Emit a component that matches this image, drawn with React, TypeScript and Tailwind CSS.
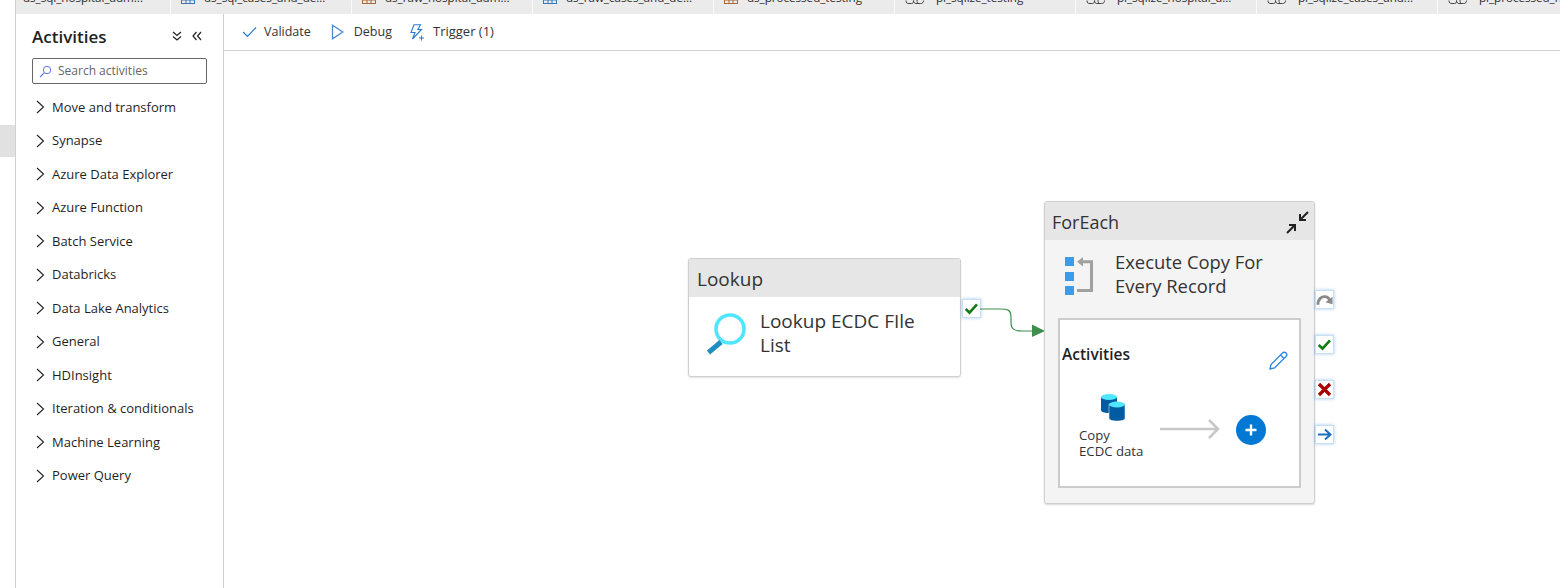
import React from "react";

const font = { fontFamily: '"Open Sans","Noto Sans",sans-serif' };

function TableIcon({ color }: { color: string }) {
  return (
    <svg width="14" height="14" viewBox="0 0 14 14" className="shrink-0">
      <rect x="0.5" y="-4.5" width="13" height="8" fill="none" stroke={color} />
      <path d="M5 -4V3M9 -4V3M0 0H14" stroke={color} />
    </svg>
  );
}

function PipeIcon() {
  return (
    <svg width="20" height="14" viewBox="0 0 20 14" className="shrink-0">
      <path d="M1 0.5C1 3 2 3.5 4 3.5H6.5C8 3.5 8.5 2.5 8.5 0.5M8.5 0.5C8.5 3 10 3.5 11 3.5H15.5C17.5 3.5 18.5 2.5 18.5 0.5M12 0C12 2 12.5 3 13 3.5" fill="none" stroke="#444" strokeWidth="1" />
    </svg>
  );
}

const tabs: { label: string; icon?: "blue" | "brown" | "pipe"; first?: boolean }[] = [
  { label: "ds_sql_hospital_adm...", first: true },
  { label: "ds_sql_cases_and_de...", icon: "blue" },
  { label: "ds_raw_hospital_adm...", icon: "brown" },
  { label: "ds_raw_cases_and_de...", icon: "blue" },
  { label: "ds_processed_testing", icon: "brown" },
  { label: "pl_sqlize_testing", icon: "pipe" },
  { label: "pl_sqlize_hospital_a...", icon: "pipe" },
  { label: "pl_sqlize_cases_and...", icon: "pipe" },
  { label: "pl_processed_h...", icon: "pipe" },
];

const groups = [
  "Move and transform",
  "Synapse",
  "Azure Data Explorer",
  "Azure Function",
  "Batch Service",
  "Databricks",
  "Data Lake Analytics",
  "General",
  "HDInsight",
  "Iteration & conditionals",
  "Machine Learning",
  "Power Query",
];

function Status({ top, children }: { top: number; children: React.ReactNode }) {
  return (
    <div
      className="absolute left-[1315px] w-[19px] h-[19px] bg-white border border-[#c7e0f4] shadow-[0_0_3px_rgba(80,150,230,0.5)] flex items-center justify-center"
      style={{ top }}
    >
      {children}
    </div>
  );
}

const Check = () => (
  <svg width="15" height="13" viewBox="0 0 15 13">
    <path d="M1.8 7L5.5 10.6L13 2.4" fill="none" stroke="#107c10" strokeWidth="2.6" />
  </svg>
);

export default function App() {
  return (
    <div className="flex w-[1560px] h-[588px] bg-white overflow-hidden text-[#242424]" style={font}>
      <div className="w-[16px] shrink-0 border-r border-[#d0d0d0] pt-[125px]">
        <div className="h-[32px] bg-[#e1e1e1]" />
      </div>
      <div className="flex-1 flex flex-col min-w-0">
        <div className="h-[14px] shrink-0 flex bg-[#ebebeb] overflow-hidden">
          {tabs.map((t) => (
            <div
              key={t.label}
              className={`${t.first ? "w-[155px] pl-[7px]" : "w-[181px] pl-[10px]"} shrink-0 h-[14px] border-r border-[#fafafa] flex items-start`}
            >
              {t.icon === "pipe" ? (
                <span className="mr-[11px] flex"><PipeIcon /></span>
              ) : t.icon ? (
                <span className="mr-[9px] flex"><TableIcon color={t.icon === "blue" ? "#3a76b8" : "#a8683a"} /></span>
              ) : null}
              <span className="text-[11.6px] leading-[16px] -mt-[10px] whitespace-nowrap text-[#2a2a2a]">{t.label}</span>
            </div>
          ))}
        </div>
        <div className="flex-1 flex min-h-0">
          <aside className="w-[208px] shrink-0 border-r border-[#d0d0d0] pl-[16px] pr-[16px]">
            <div className="flex items-center justify-between h-[44px]">
              <span className="text-[17px] font-semibold text-[#1f1f1f] pt-[1px]">Activities</span>
              <div className="flex items-center gap-[10px] pr-[5px]">
                <svg width="10" height="10" viewBox="0 0 10 10">
                  <path d="M1 1L5 4.5L9 1M1 5.5L5 9L9 5.5" fill="none" stroke="#222" strokeWidth="1.2" />
                </svg>
                <svg width="10" height="10" viewBox="0 0 10 10">
                  <path d="M4.5 1L1 5L4.5 9M9 1L5.5 5L9 9" fill="none" stroke="#222" strokeWidth="1.2" />
                </svg>
              </div>
            </div>
            <div className="h-[26px] w-[175px] border border-[#666] rounded-[2px] flex items-center pl-[6px]">
              <svg width="13" height="13" viewBox="0 0 13 13" className="mr-[6px]">
                <circle cx="8" cy="5" r="3.7" fill="none" stroke="#5c7ce0" strokeWidth="1" />
                <path d="M5.2 7.8L1 12" stroke="#5c7ce0" strokeWidth="1.2" />
              </svg>
              <span className="text-[12px] text-[#666]">Search activities</span>
            </div>
            <div className="mt-[6.5px]">
              {groups.map((g) => (
                <div key={g} className="flex items-center h-[33.5px] pl-[4px]">
                  <svg width="9" height="14" viewBox="0 0 9 14" className="mr-[7px] shrink-0">
                    <path d="M1 1L7.5 7L1 13" fill="none" stroke="#222" strokeWidth="1.1" />
                  </svg>
                  <span className="text-[13px] text-[#1f1f1f] whitespace-nowrap">{g}</span>
                </div>
              ))}
            </div>
          </aside>
          <div className="flex-1 flex flex-col min-w-0">
            <div className="h-[37px] shrink-0 border-b border-[#d0d0d0] flex items-center pl-[18px] text-[12.5px] text-[#333]">
              <svg width="15" height="12" viewBox="0 0 15 12" className="mr-[7px]">
                <path d="M1 6L5.5 10.5L14 1.5" fill="none" stroke="#2a7bd0" strokeWidth="1.2" />
              </svg>
              <span>Validate</span>
              <svg width="13" height="16" viewBox="0 0 13 16" className="ml-[20px] mr-[10px]">
                <path d="M1.5 1.2L11.8 8L1.5 14.8Z" fill="none" stroke="#4a86d0" strokeWidth="1.3" />
              </svg>
              <span>Debug</span>
              <svg width="16" height="17" viewBox="0 0 16 17" className="ml-[17px] mr-[8px]">
                <path d="M5 0.8H11.5L8.8 5.5H12.5L3.5 15L6 8.5H2Z" fill="none" stroke="#2a7bd0" strokeWidth="1.1" />
                <path d="M12.5 11.5V16.5M10 14H15" stroke="#2a7bd0" strokeWidth="1.1" />
              </svg>
              <span className="text-[13px]">Trigger (1)</span>
            </div>
            <div className="flex-1" />
          </div>
        </div>
      </div>

      {/* Lookup node */}
      <div className="absolute left-[688px] top-[258px] w-[273px] h-[119px] rounded-[3px] bg-white border border-[#cfcfcf] shadow-[0_1px_2px_rgba(0,0,0,0.12)] overflow-hidden">
        <div className="h-[38px] bg-[#e6e6e6] flex items-center pl-[8px] pt-[3px] text-[19px] text-[#333]">Lookup</div>
        <div className="flex pl-[18px] pt-[12px]">
          <svg width="40" height="44" viewBox="0 0 40 44" className="mt-[3px] shrink-0">
            <circle cx="23" cy="17" r="14" fill="none" stroke="#50e6ff" strokeWidth="3.6" />
            <path d="M14 30L1.5 40.5" stroke="#1f8fc0" strokeWidth="5" />
          </svg>
          <div className="ml-[13px] w-[170px] text-[19px] leading-[24px] text-[#333]">Lookup ECDC FIle List</div>
        </div>
      </div>

      {/* Connector */}
      <div className="absolute left-[962px] top-[299px] w-[19px] h-[19px] bg-white border border-[#c7e0f4] shadow-[0_0_3px_rgba(80,150,230,0.5)] flex items-center justify-center">
        <Check />
      </div>
      <svg width="70" height="40" viewBox="0 0 70 40" className="absolute left-[980px] top-[300px]">
        <path d="M0 9H20C28 9 31 10 31 17V22C31 29 34 31 42 31H54" fill="none" stroke="#3e8e4c" strokeWidth="1.2" />
        <path d="M52 24.5L65 31L52 37Z" fill="#3e8e4c" />
      </svg>

      {/* ForEach node */}
      <div className="absolute left-[1044px] top-[201px] w-[271px] h-[303px] rounded-[3px] bg-[#f4f4f4] border border-[#cfcfcf] shadow-[0_1px_2px_rgba(0,0,0,0.15)] overflow-hidden">
        <div className="h-[38px] bg-[#e6e6e6] flex items-center justify-between pl-[7px] pr-[4px] text-[18px] text-[#333]">
          <span className="pt-[3px]">ForEach</span>
          <svg width="25" height="25" viewBox="0 0 25 25" className="mt-[3px]">
            <path d="M23 2L15 10M15 4V10H21M2 23L10 15M4 15H10V21" fill="none" stroke="#222" strokeWidth="2" />
          </svg>
        </div>
        <div className="flex pl-[20px] h-[78px] pt-[10px]">
          <svg width="30" height="40" viewBox="0 0 30 40" className="mt-[7px] shrink-0">
            <rect x="0" y="0" width="9" height="9" fill="#3e9be8" />
            <rect x="0" y="15" width="9" height="9" fill="#3e9be8" />
            <rect x="0" y="29" width="9" height="9" fill="#3e9be8" />
            <path d="M12 33.5H26.5V4.7H17" fill="none" stroke="#a0a0a0" strokeWidth="3" />
            <path d="M12 4.7L18 0V9.5Z" fill="#a0a0a0" />
          </svg>
          <div className="ml-[20px] text-[18.4px] leading-[24px] text-[#333] w-[172px]">Execute Copy For Every Record</div>
        </div>
        <div className="relative mx-[13px] h-[170px] w-[243px] bg-white border-2 border-[#cccccc]">
          <div className="absolute left-[2px] top-[23px] text-[15.5px] font-semibold text-[#1f1f1f]">Activities</div>
          <svg width="20" height="20" viewBox="0 0 20 20" className="absolute left-[208px] top-[31px]">
            <path d="M2 18L3 13.5L14.5 2C15.5 1 17 1 18 2C19 3 19 4.5 18 5.5L6.5 17Z M12.5 4L16 7.5" fill="none" stroke="#2a86e0" strokeWidth="1.3" />
          </svg>
          <svg width="26" height="29" viewBox="0 0 26 29" className="absolute left-[40px] top-[73px]">
            <path d="M1 4V17C1 19 4 20 9 20C14 20 17 19 17 17V4Z" fill="#005ba1" />
            <ellipse cx="9" cy="4" rx="8" ry="3" fill="#50e6ff" />
            <path d="M9 11V25C9 27 12 28 17 28C22 28 25 27 25 25V11Z" fill="#005ba1" stroke="#fff" strokeWidth="0.5" />
            <ellipse cx="17" cy="11.5" rx="8" ry="3" fill="#50e6ff" />
          </svg>
          <div className="absolute left-[19px] top-[107px] text-[13.2px] leading-[16px] text-[#333]">
            Copy
            <br />
            ECDC data
          </div>
          <svg width="60" height="24" viewBox="0 0 60 24" className="absolute left-[100px] top-[97px]">
            <path d="M0 12H58M49 3L58 12L49 21" fill="none" stroke="#c8c8c8" strokeWidth="2.6" />
          </svg>
          <div className="absolute left-[176px] top-[95px] w-[30px] h-[30px] rounded-full bg-[#0078d4] flex items-center justify-center">
            <svg width="14" height="14" viewBox="0 0 14 14">
              <path d="M7 1.5V12.5M1.5 7H12.5" stroke="#fff" strokeWidth="2.4" />
            </svg>
          </div>
        </div>
      </div>

      <Status top={290}>
        <svg width="18" height="13" viewBox="0 0 18 13">
          <path d="M2 12C2 6 6 3 10 3.5C12.5 3.8 14 5.5 15 8" fill="none" stroke="#8a8a8a" strokeWidth="3" />
          <path d="M10 9.5L17.5 11.5V3.5Z" fill="#8a8a8a" />
        </svg>
      </Status>
      <Status top={335}>
        <Check />
      </Status>
      <Status top={380}>
        <svg width="15" height="15" viewBox="0 0 15 15">
          <path d="M2 2L13 13M13 2L2 13" stroke="#a80000" strokeWidth="3.2" />
        </svg>
      </Status>
      <Status top={425}>
        <svg width="15" height="13" viewBox="0 0 15 13">
          <path d="M1 6.5H13M8 1.5L13.5 6.5L8 11.5" fill="none" stroke="#1f6fbf" strokeWidth="2" />
        </svg>
      </Status>
    </div>
  );
}
